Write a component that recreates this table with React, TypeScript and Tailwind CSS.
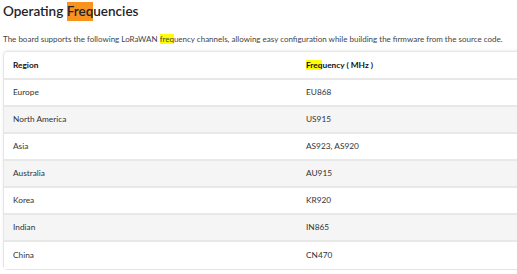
const rows = [
  ["Europe", "EU868"],
  ["North America", "US915"],
  ["Asia", "AS923, AS920"],
  ["Australia", "AU915"],
  ["Korea", "KR920"],
  ["Indian", "IN865"],
  ["China", "CN470"],
]

export default function App() {
  return (
    <div className="w-[517px] h-[274px] overflow-hidden bg-white px-[3px] pt-[2px] font-['Lato',sans-serif] text-[#222]">
      <h2 className="flex h-[19px] items-center text-[13.5px] font-semibold text-[#1f2329]">
        <span>Operating&nbsp;</span>
        <span className="flex h-[19px] items-center bg-[#f7931e]">Freq</span>
        <span>uencies</span>
      </h2>
      <p className="mt-[12px] whitespace-nowrap text-[8px] leading-[12px] text-[#444]">
        The board supports the following LoRaWAN <span className="bg-[#ffff00]">freq</span>uency channels, allowing easy
        configuration while building the firmware from the source code.
      </p>
      <div className="mt-[6px] w-[530px] rounded-[4px] border border-[#e5e5e5] shadow-[0_-1px_3px_rgba(0,0,0,0.06)]">
        <div className="flex h-[28px] items-center border-b-2 border-[#e8e8e8] text-[8.3px] font-bold text-[#111]">
          <div className="w-[302px] pl-[9px]">Region</div>
          <div>
            <span className="bg-[#ffff00]">Freq</span>uency ( MHz )
          </div>
        </div>
        {rows.map(([region, freq], i) => (
          <div
            key={region}
            className={`flex h-[27px] items-center text-[8.3px] text-[#333] ${i % 2 === 1 ? "bg-[#f5f5f5]" : "bg-white"} ${i < rows.length - 1 ? "border-b-2 border-[#e8e8e8]" : ""}`}
          >
            <div className="w-[302px] pl-[9px]">{region}</div>
            <div>{freq}</div>
          </div>
        ))}
      </div>
    </div>
  )
}
